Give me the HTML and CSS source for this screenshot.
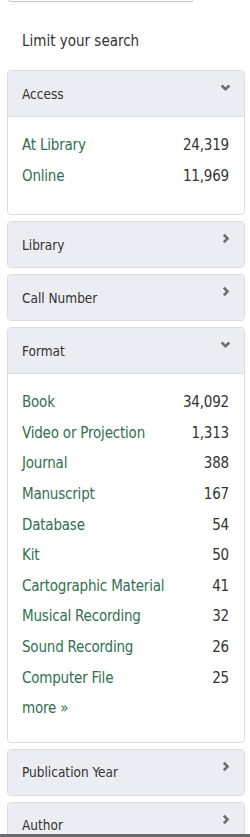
FILE: index.html
```html
<!DOCTYPE html>
<html lang="en">
<head>
  <meta charset="UTF-8" />
  <title>Limit your search</title>
  <link rel="stylesheet" href="styles.css">
</head>
<body>
  <div class="search-box"></div>

  <div class="sidebar">
    <h2>Limit your search</h2>

    <div class="facet open">
      <div class="facet-head">
        <span>Access</span>
        <svg class="chev" viewBox="0 0 10 10"><path d="M1.5 3.2 L5 6.5 L8.5 3.2" /></svg>
      </div>
      <ul class="facet-body short">
        <li><a href="#">At Library</a><span>24,319</span></li>
        <li><a href="#">Online</a><span>11,969</span></li>
      </ul>
    </div>

    <div class="facet">
      <div class="facet-head">
        <span>Library</span>
        <svg class="chev" viewBox="0 0 10 10"><path d="M3.5 1.5 L6.8 5 L3.5 8.5" /></svg>
      </div>
    </div>

    <div class="facet">
      <div class="facet-head">
        <span>Call Number</span>
        <svg class="chev" viewBox="0 0 10 10"><path d="M3.5 1.5 L6.8 5 L3.5 8.5" /></svg>
      </div>
    </div>

    <div class="facet open">
      <div class="facet-head">
        <span>Format</span>
        <svg class="chev" viewBox="0 0 10 10"><path d="M1.5 3.2 L5 6.5 L8.5 3.2" /></svg>
      </div>
      <ul class="facet-body">
        <li><a href="#">Book</a><span>34,092</span></li>
        <li><a href="#">Video or Projection</a><span>1,313</span></li>
        <li><a href="#">Journal</a><span>388</span></li>
        <li><a href="#">Manuscript</a><span>167</span></li>
        <li><a href="#">Database</a><span>54</span></li>
        <li><a href="#">Kit</a><span>50</span></li>
        <li><a href="#">Cartographic Material</a><span>41</span></li>
        <li><a href="#">Musical Recording</a><span>32</span></li>
        <li><a href="#">Sound Recording</a><span>26</span></li>
        <li><a href="#">Computer File</a><span>25</span></li>
        <li><a href="#">more »</a></li>
      </ul>
    </div>

    <div class="facet">
      <div class="facet-head">
        <span>Publication Year</span>
        <svg class="chev" viewBox="0 0 10 10"><path d="M3.5 1.5 L6.8 5 L3.5 8.5" /></svg>
      </div>
    </div>

    <div class="facet">
      <div class="facet-head">
        <span>Author</span>
        <svg class="chev" viewBox="0 0 10 10"><path d="M3.5 1.5 L6.8 5 L3.5 8.5" /></svg>
      </div>
    </div>
  </div>

  <div class="window-edge"></div>
</body>
</html>
```

FILE: styles.css
```css
body {
  font-family: "DejaVu Sans Condensed", "Liberation Sans", sans-serif;
  background: white;
  color: #333;
  margin: 0;
  padding: 0;
}

.search-box {
  width: 183px;
  height: 1px;
  margin-left: 8px;
  border: 1px solid #c8c8c8;
  border-top: none;
  border-radius: 0 0 4px 4px;
}

.sidebar {
  padding: 0 5px 0 7px;
}

h2 {
  font-size: 15px;
  font-weight: normal;
  color: #333;
  margin: 29px 0 19px 15px;
  line-height: 20px;
}

.facet {
  border: 1px solid #dcdde0;
  border-radius: 4px;
  margin-bottom: 6px;
  overflow: hidden;
}

.facet-head {
  display: flex;
  justify-content: space-between;
  align-items: center;
  height: 45px;
  padding: 0 13px 0 14px;
  background: #ebedf2;
  font-size: 13.5px;
}

.facet.open .facet-head {
  border-bottom: 1px solid #dcdde0;
}

.chev {
  width: 11px;
  height: 11px;
  margin-top: -12px;
  fill: none;
  stroke: #6f6f6f;
  stroke-width: 2.4;
}

.facet-body {
  list-style: none;
  margin: 0;
  padding: 13px 15px 18px 14px;
}

.facet-body.short {
  padding-bottom: 23px;
}

.facet-body li {
  display: flex;
  justify-content: space-between;
  font-size: 15px;
  letter-spacing: -0.2px;
  line-height: 30.6px;
}

.facet-body a {
  color: #31704f;
  text-decoration: none;
}

.facet-body span {
  color: #333;
}

.window-edge {
  position: fixed;
  left: 0;
  right: 0;
  bottom: 0;
  height: 3px;
  background: #6b6b6b;
}
```
